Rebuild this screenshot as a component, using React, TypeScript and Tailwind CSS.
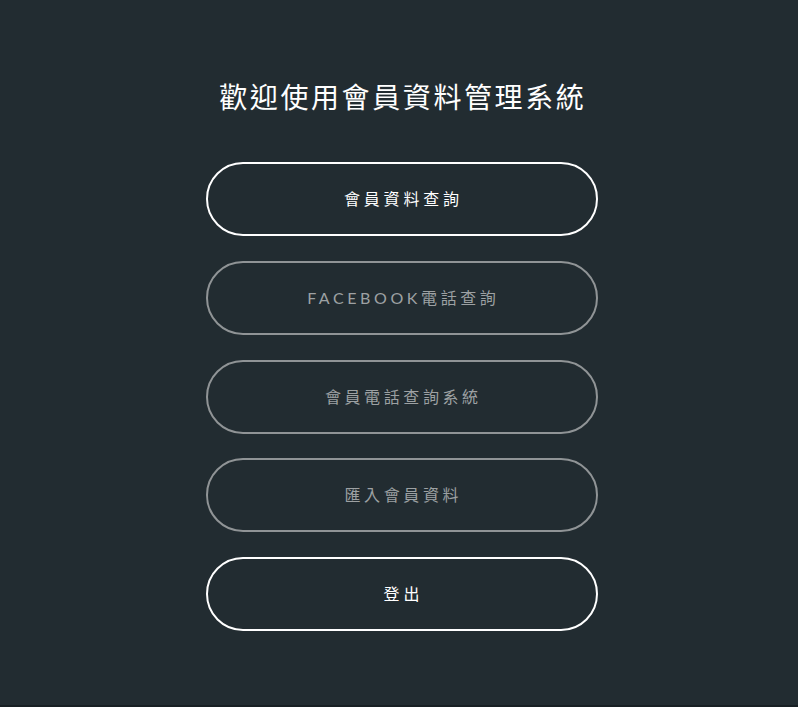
const menu = [
  { label: "會員資料查詢", active: true },
  { label: "FACEBOOK電話查詢", active: false },
  { label: "會員電話查詢系統", active: false },
  { label: "匯入會員資料", active: false },
  { label: "登出", active: true },
];

export default function App() {
  return (
    <div
      className="min-h-[707px] bg-[#222c31] flex flex-col border-b-2 border-[#182024]"
      style={{ fontFamily: 'Lato, "Noto Sans CJK TC", sans-serif' }}
    >
      <div className="flex-1 flex flex-col items-center pt-[76px] pl-[5px]">
        <h1 className="text-[28px] leading-[42px] tracking-[2.6px] pl-[2.6px] text-white font-normal">
          歡迎使用會員資料管理系統
        </h1>

        <div className="mt-[44px] flex flex-col gap-[24.75px]">
          {menu.map((item, i) => (
            <button
              key={i}
              className={
                item.active
                  ? "w-[392px] h-[74px] rounded-full border-2 border-white text-white text-[16px] tracking-[3.8px] pl-[3.8px] flex items-center justify-center"
                  : "w-[392px] h-[74px] rounded-full border-2 border-[#909496] text-[#9da1a3] text-[16px] tracking-[3.6px] pl-[3.6px] flex items-center justify-center"
              }
            >
              {item.label}
            </button>
          ))}
        </div>
      </div>
    </div>
  );
}
